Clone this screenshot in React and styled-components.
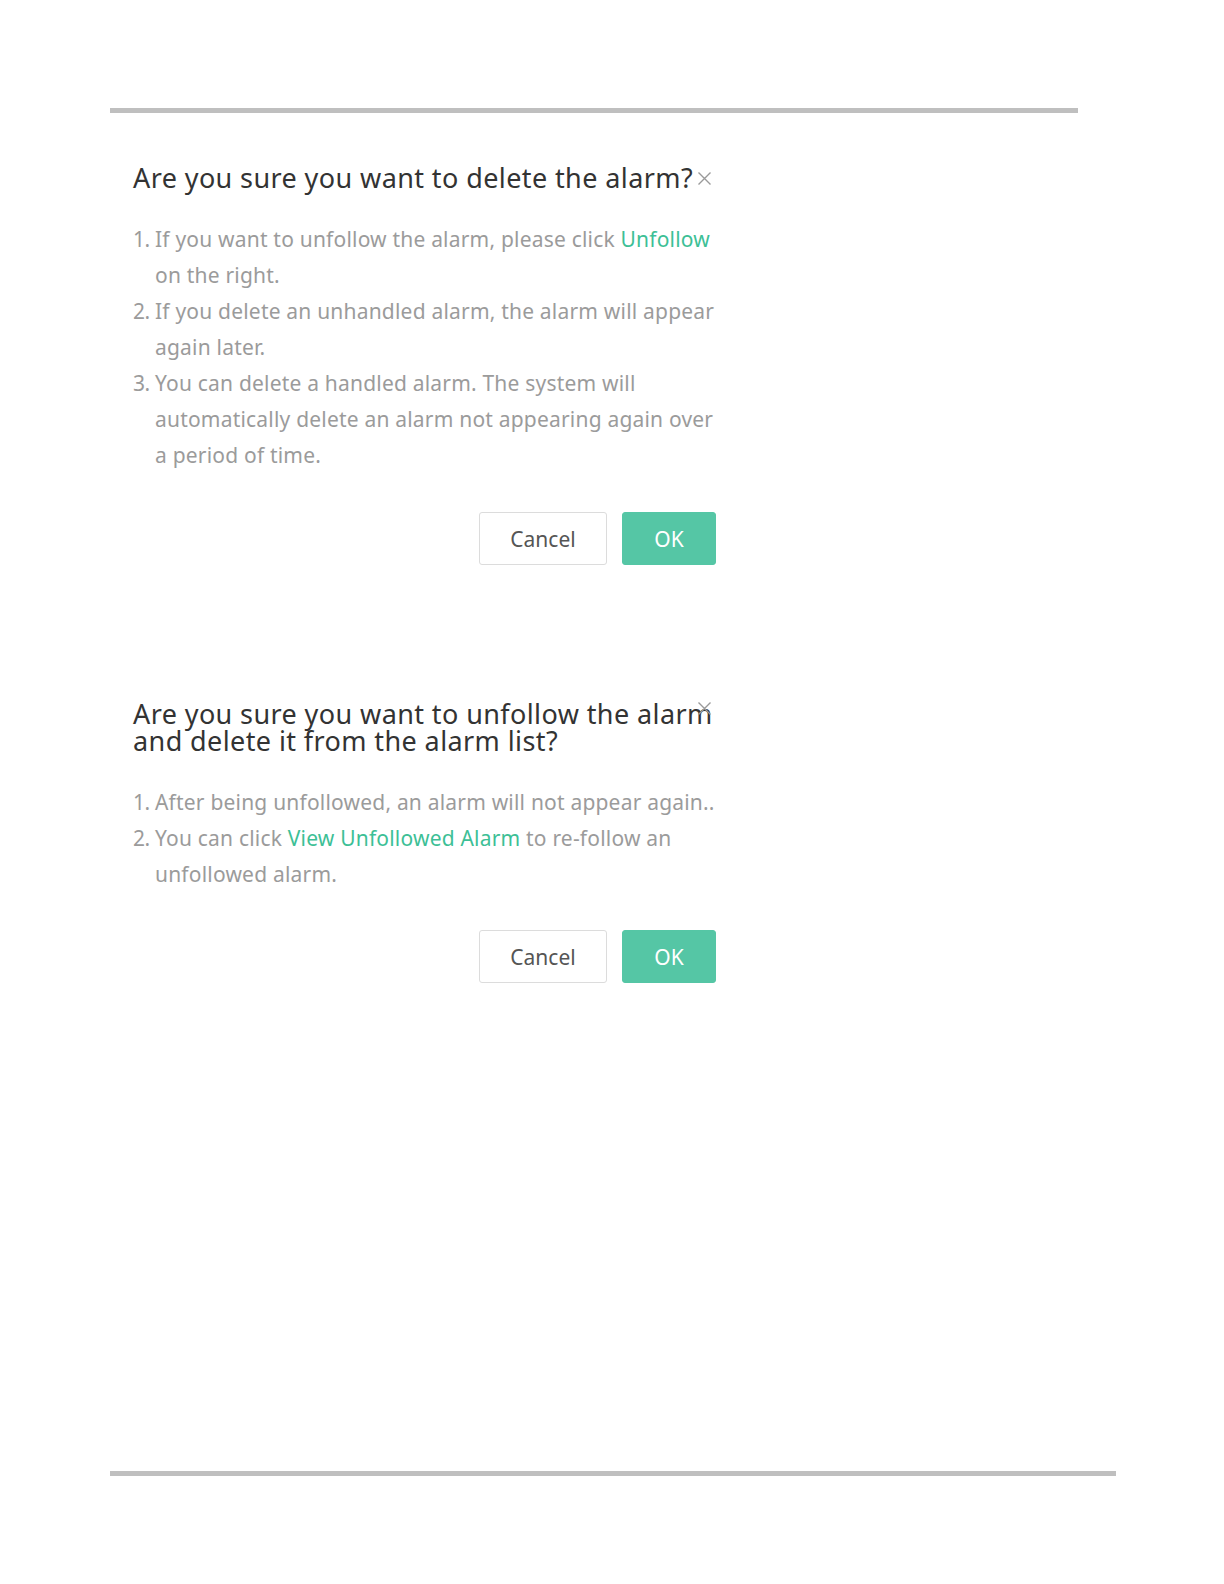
import React from 'react'
import styled, { createGlobalStyle } from 'styled-components'

const GlobalStyle = createGlobalStyle`
  body {
    margin: 0;
    background: #ffffff;
    font-family: 'Noto Sans', 'Open Sans', sans-serif;
  }
`

const Page = styled.div`
  display: flex;
  flex-direction: column;
  min-height: 1584px;
  box-sizing: border-box;
  padding: 108px 0 108px 110px;
`

const Rule = styled.div`
  width: ${(p) => p.width}px;
  height: 5px;
  background: #bfbfbf;
  margin-top: ${(p) => (p.bottom ? 'auto' : '0')};
`

const Dialog = styled.section`
  width: 583px;
  margin-left: 23px;
  margin-top: ${(p) => p.offset}px;
  display: flex;
  flex-direction: column;
`

const Header = styled.header`
  position: relative;
`

const Title = styled.h2`
  margin: 0;
  font-size: 27px;
  font-weight: 400;
  line-height: ${(p) => (p.tight ? '27px' : '30px')};
  color: #333333;
  letter-spacing: 0.4px;
`

const Close = styled.button`
  position: absolute;
  top: ${(p) => p.top}px;
  right: 4px;
  width: 16px;
  height: 16px;
  padding: 0;
  border: 0;
  background: none;
  color: #9a9a9a;
  display: flex;
  align-items: center;
  justify-content: center;
`

const List = styled.ol`
  margin: ${(p) => p.gap}px -10px 0 0;
  padding: 0;
  list-style: none;
  font-size: 21px;
  line-height: 36px;
  color: #9b9b9b;
  letter-spacing: 0.2px;
`

const Item = styled.li`
  display: flex;
`

const Num = styled.span`
  flex: 0 0 22px;
  letter-spacing: -0.5px;
`

const Link = styled.a`
  color: #3dbf96;
  text-decoration: none;
`

const Actions = styled.div`
  display: flex;
  justify-content: flex-end;
  gap: 15px;
  margin-top: ${(p) => p.gap}px;
`

const Button = styled.button`
  height: 53px;
  box-sizing: border-box;
  border-radius: 3px;
  font-family: inherit;
  font-size: 21px;
  padding: 0;
  width: ${(p) => (p.primary ? '94px' : '128px')};
  border: 1px solid ${(p) => (p.primary ? '#55c6a5' : '#dcdcdc')};
  background: ${(p) => (p.primary ? '#55c6a5' : '#ffffff')};
  color: ${(p) => (p.primary ? '#ffffff' : '#555555')};
`

const CloseIcon = () => (
  <svg width="15" height="15" viewBox="0 0 15 15">
    <path d="M1.5 1.5L13.5 13.5M13.5 1.5L1.5 13.5" stroke="currentColor" strokeWidth="1.4" />
  </svg>
)

const Confirm = ({ title, tight, closeTop, items, offset, listGap, actionGap }) => (
  <Dialog offset={offset}>
    <Header>
      <Title tight={tight}>{title}</Title>
      <Close top={closeTop} aria-label="Close">
        <CloseIcon />
      </Close>
    </Header>
    <List gap={listGap}>
      {items.map((item, i) => (
        <Item key={i}>
          <Num>{i + 1}.</Num>
          <span>{item}</span>
        </Item>
      ))}
    </List>
    <Actions gap={actionGap}>
      <Button>Cancel</Button>
      <Button primary>OK</Button>
    </Actions>
  </Dialog>
)

const App = () => (
  <>
    <GlobalStyle />
    <Page>
      <Rule width={968} />
      <Confirm
        offset={50}
        title="Are you sure you want to delete the alarm?"
        closeTop={7}
        listGap={28}
        actionGap={39}
        items={[
          <>
            If you want to unfollow the alarm, please click <Link>Unfollow</Link> on the right.
          </>,
          'If you delete an unhandled alarm, the alarm will appear again later.',
          'You can delete a handled alarm. The system will automatically delete an alarm not appearing again over a period of time.',
        ]}
      />
      <Confirm
        offset={135}
        tight
        title="Are you sure you want to unfollow the alarm and delete it from the alarm list?"
        closeTop={0}
        listGap={30}
        actionGap={38}
        items={[
          'After being unfollowed, an alarm will not appear again..',
          <>
            You can click <Link>View Unfollowed Alarm</Link> to re-follow an unfollowed alarm.
          </>,
        ]}
      />
      <Rule width={1006} bottom />
    </Page>
  </>
)

export default App
